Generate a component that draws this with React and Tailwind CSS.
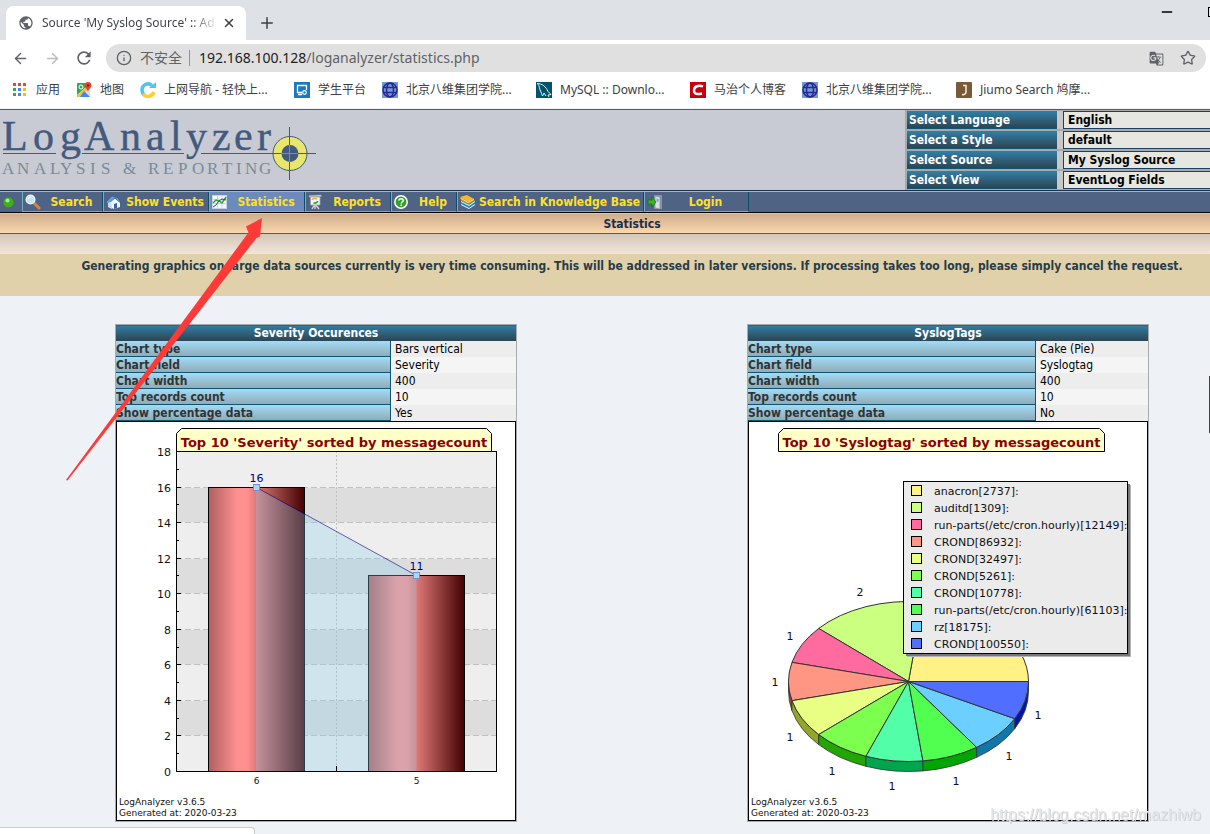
import React from 'react';
import { ArrowLeft, ArrowRight, Info, Minus, Plus, Star, X } from 'lucide-react';
import { MdGTranslate, MdPublic, MdRefresh } from 'react-icons/md';

/* ---------- bookmark icons ---------- */

const AppsIcon = () => (
  <svg width="16" height="16" viewBox="0 0 16 16">
    {['#ea4335', '#ea4335', '#ea4335', '#34a853', '#4285f4', '#fbbc05', '#34a853', '#4285f4', '#fbbc05'].map((c, i) => (
      <rect key={i} x={1 + (i % 3) * 5} y={1 + Math.floor(i / 3) * 5} width="3" height="3" fill={c} />
    ))}
  </svg>
);

const MapsIcon = () => (
  <svg width="16" height="16" viewBox="0 0 16 16">
    <rect x="1" y="1" width="13" height="14" rx="1" fill="#34a853" />
    <path d="M1 13 12 3l2 2v10H3z" fill="#d8dde2" />
    <path d="M1 14 10 5l2 2-8 8H2z" fill="#fbc02d" />
    <path d="M8 9l6 6H4z" fill="#4285f4" />
    <circle cx="5" cy="5" r="2" fill="none" stroke="#fff" />
    <path d="M12 0a3.500 3.500 0 0 1 3.500 3.500C15.500 6 12.500 7 12 10 11.500 7 8.500 6 8.500 3.500A3.500 3.500 0 0 1 12 0z" fill="#ea4335" />
    <circle cx="12" cy="3.500" r="1.200" fill="#8c1d18" />
  </svg>
);

const SwirlIcon = () => (
  <svg width="16" height="16" viewBox="0 0 16 16">
    <path d="M12 3.500A6 6 0 0 0 2 8c0 2 1 4 2.500 5" fill="none" stroke="#4fc4f0" strokeWidth="3.500" />
    <path d="M3 12c3 4 9 3 11-2" fill="none" stroke="#fbd02c" strokeWidth="3.500" />
    <path d="M9 6h7V0z" fill="#4fc4f0" />
  </svg>
);

const PlatformIcon = () => (
  <svg width="16" height="16" viewBox="0 0 16 16">
    <rect width="16" height="16" fill="#1a78c2" />
    <path d="M8 10.500H3.500v-7h9V8M4 12.500h4" fill="none" stroke="#fff" strokeWidth="1.300" />
    <circle cx="10.500" cy="10.500" r="1.800" fill="none" stroke="#fff" strokeWidth="1.200" />
  </svg>
);

const BaweiIcon = () => (
  <svg width="16" height="16" viewBox="0 0 16 16">
    <rect width="16" height="16" fill="#6f9bd0" />
    <g fill="none" stroke="#2a2896" strokeWidth="1.500">
      <circle cx="8" cy="8" r="7" />
      <ellipse cx="8" cy="8" rx="3.500" ry="7" />
      <path d="M1 5.500h14M1 10.500h14" />
    </g>
  </svg>
);

const MysqlIcon = () => (
  <svg width="16" height="16" viewBox="0 0 16 16">
    <rect width="16" height="16" fill="#00546b" />
    <path d="M1 1.500c5 0 9 3 11 8l3 3-3 .5 1 2M1.500 1.500C4 4 3 7 5 10c.5 2 1 3 1.500 4l1.500-3 2 3" fill="none" stroke="#e8f0f3" />
  </svg>
);

const CsdnIcon = () => (
  <svg width="16" height="16" viewBox="0 0 16 16">
    <rect width="16" height="16" fill="#c8000b" />
    <path d="M13 4.500C9 3 4 4 4 8.500c0 4 4 4 8 3" fill="none" stroke="#fff" strokeWidth="2.400" />
  </svg>
);

const JiumoIcon = () => (
  <svg width="16" height="16" viewBox="0 0 16 16">
    <rect width="16" height="16" rx="1" fill="#7c5936" />
    <path d="M7 3.500h3V10c0 2-2 3-4 2.500" fill="none" stroke="#f4efe9" strokeWidth="1.500" />
  </svg>
);

const bookmarks = [
  { label: '应用', icon: AppsIcon, width: 'w-[64px]' },
  { label: '地图', icon: MapsIcon, width: 'w-[64px]' },
  { label: '上网导航 - 轻快上...', icon: SwirlIcon, width: 'w-[154px]' },
  { label: '学生平台', icon: PlatformIcon, width: 'w-[88px]' },
  { label: '北京八维集团学院...', icon: BaweiIcon, width: 'w-[154px]' },
  { label: 'MySQL :: Downlo...', icon: MysqlIcon, width: 'w-[154px]' },
  { label: '马治个人博客', icon: CsdnIcon, width: 'w-[112px]' },
  { label: '北京八维集团学院...', icon: BaweiIcon, width: 'w-[154px]' },
  { label: 'Jiumo Search 鸠摩...', icon: JiumoIcon, width: 'w-[154px]' },
];

/* ---------- menu icons ---------- */

const SearchIcon = () => (
  <svg width="16" height="16" viewBox="0 0 16 16" className="shrink-0">
    <path d="M9 9l5 5" stroke="#d8853a" strokeWidth="3" strokeLinecap="round" />
    <circle cx="5.500" cy="5.500" r="4.300" fill="#bfe3fb" stroke="#e9f1f8" strokeWidth="1.500" />
    <path d="M3 5a3 3 0 0 1 3-2" stroke="#fff" strokeWidth="1.200" fill="none" />
  </svg>
);

const HomeIcon = () => (
  <svg width="16" height="16" viewBox="0 0 16 16" className="shrink-0">
    <path d="M3 8l4-4 7 3v6l-6 2-5-2z" fill="#f1f4f8" />
    <path d="M0 8l6-6 6 2 3 5-3-2-3-3-7 6z" fill="#5f9fdc" stroke="#2c5d94" strokeWidth=".6" />
    <path d="M8 15v-5l3-1v5z" fill="#2f67a5" />
    <path d="M2 9v4l4 2v-4l-2-3z" fill="#d2dbe6" />
  </svg>
);

const StatsIcon = () => (
  <svg width="16" height="16" viewBox="0 0 16 16" className="shrink-0">
    <rect x=".5" y="1.500" width="14" height="13" fill="#f6f8fb" stroke="#c7d3e2" />
    <path d="M1 5.500h13M1 9.500h13M5.500 2v12M10 2v12" stroke="#cad6e6" />
    <path d="M1 9l3-3 3 1 3 2 4-6" fill="none" stroke="#2da82c" strokeWidth="1.500" />
    <path d="M1 13l3-2 3-4 3-2 4 1" fill="none" stroke="#2a4f8c" />
  </svg>
);

const ReportsIcon = () => (
  <svg width="16" height="16" viewBox="0 0 16 16" className="shrink-0">
    <path d="M7 10l-3 5M7 10l4 5M7 10v5" stroke="#d5d9de" strokeWidth="1.300" />
    <path d="M1 1.500l12-.5.5 1.500L1 3z" fill="#e4e7eb" stroke="#8a919b" strokeWidth=".5" />
    <path d="M2.500 3H12v8H2.500z" fill="#f5f6f7" stroke="#9ca3ac" strokeWidth=".8" />
    <path d="M4 6a3 2 0 0 1 5-1" fill="none" stroke="#ecb32d" strokeWidth="1.500" />
    <path d="M9.500 7a3 2 0 0 1-4 2" fill="none" stroke="#2fae36" strokeWidth="1.800" />
  </svg>
);

const HelpIcon = () => (
  <svg width="16" height="16" viewBox="0 0 16 16" className="shrink-0">
    <circle cx="7" cy="8" r="6.200" fill="#35a02a" stroke="#fff" strokeWidth="1.500" />
    <path d="M5 6.500C5 4 9.200 4 9.200 6.500 9.200 8 7.200 8 7.200 9.500M7.200 10.500V12" fill="none" stroke="#fff" strokeWidth="1.500" />
  </svg>
);

const BooksIcon = () => (
  <svg width="16" height="16" viewBox="0 0 16 16" className="shrink-0">
    <path d="M1 10l8 5 6-4-1-3-13-1z" fill="#2e82cc" />
    <path d="M1 10.500l8 4 6-4" fill="none" stroke="#eef4fa" />
    <path d="M1 7l8 4 6-4-2-3-12 1z" fill="#58a83a" />
    <path d="M1 7.500l8 4 6-4" fill="none" stroke="#eef7e9" />
    <path d="M0 3l7-2 7 4-6 3z" fill="#f7b92b" />
    <path d="M0 3v2l8 5 6-4V5L8 8z" fill="#e58a16" />
    <path d="M1 4.500l7 4 6-3" fill="none" stroke="#fdf2d4" strokeWidth=".8" />
  </svg>
);

const LoginIcon = () => (
  <svg width="16" height="16" viewBox="0 0 16 16" className="shrink-0">
    <path d="M7 1h8v14H7z" fill="#8d95a8" />
    <path d="M8 2l5 1v12l-5-1z" fill="#d9ddea" stroke="#7b8296" strokeWidth=".6" />
    <path d="M9.500 4.500l2 .4v3l-2-.4z" fill="#7fa2d8" />
    <path d="M1 6h4V3l4 5-4 5v-3H1z" fill="#38b428" stroke="#14700e" strokeWidth=".7" />
  </svg>
);

const menu = [
  { label: 'Search', icon: SearchIcon, width: 'w-[81px]' },
  { label: 'Show Events', icon: HomeIcon, width: 'w-[106px]' },
  { label: 'Statistics', icon: StatsIcon, width: 'w-[96px]', active: true },
  { label: 'Reports', icon: ReportsIcon, width: 'w-[86px]' },
  { label: 'Help', icon: HelpIcon, width: 'w-[66px]' },
  { label: 'Search in Knowledge Base', icon: BooksIcon, width: 'w-[187px]' },
  { label: 'Login', icon: LoginIcon, width: 'w-[105px]' },
];

const selectors = [
  { id: 'lang', label: 'Select Language', value: 'English' },
  { id: 'style', label: 'Select a Style', value: 'default' },
  { id: 'source', label: 'Select Source', value: 'My Syslog Source' },
  { id: 'view', label: 'Select View', value: 'EventLog Fields' },
];

/* ---------- browser chrome ---------- */

const BrowserChrome = () => (
  <header className="bg-white font-['Noto_Sans','Noto_Sans_CJK_SC',sans-serif] text-xs text-[#3c4043]">
    <div className="flex h-10 items-end justify-between bg-[#dee1e6] pl-[6px]">
      <div className="flex items-center">
        <div className="flex h-[34px] w-60 items-center rounded-t-lg bg-white pl-3">
          <MdPublic size={16} className="shrink-0 text-[#5f6368]" />
          <span className="ml-2 w-[176px] whitespace-nowrap bg-gradient-to-r from-[#3c4043] from-85% to-transparent bg-clip-text text-transparent">
            Source 'My Syslog Source' :: Ad
          </span>
          <button aria-label="Close tab" className="ml-1 text-[#3c4043]">
            <X size={14} strokeWidth={2.5} />
          </button>
        </div>
        <button aria-label="New tab" className="ml-3 text-[#3c4043]">
          <Plus size={18} />
        </button>
      </div>
      <div className="flex items-center self-start pt-1">
        <button aria-label="Minimize" className="text-black">
          <Minus size={16} strokeWidth={2} />
        </button>
        <button aria-label="Maximize" className="ml-[33px] h-[10px] w-[2px] border-y border-l border-black" />
      </div>
    </div>
    <div className="flex h-9 items-center pl-3 pr-1 text-[#5f6368]">
      <button aria-label="Back"><ArrowLeft size={17} /></button>
      <button aria-label="Forward" className="ml-[15px] text-[#babcbe]"><ArrowRight size={17} /></button>
      <button aria-label="Reload" className="ml-[13px]"><MdRefresh size={20} /></button>
      <div className="ml-3 flex h-7 flex-1 items-center rounded-full bg-[#e0e0e0] px-[10px] text-sm">
        <Info size={16} />
        <span className="ml-2">不安全</span>
        <span className="ml-[7px] h-4 w-px bg-[#8f9295]" />
        <span className="ml-[9px] flex-1"><span className="text-[#202124]">192.168.100.128</span>/loganalyzer/statistics.php</span>
        <button aria-label="Translate"><MdGTranslate size={15} /></button>
        <button aria-label="Bookmark" className="ml-4"><Star size={16} /></button>
      </div>
    </div>
    <nav className="flex h-8 items-start pl-3 pt-[6px]">
      {bookmarks.map((b, i) => (
        <a key={i} href="#" className={`flex shrink-0 items-center gap-2 whitespace-nowrap ${b.width}`}>
          <b.icon />
          <span>{b.label}</span>
        </a>
      ))}
    </nav>
  </header>
);

/* ---------- page header ---------- */

const Logo = () => (
  <svg width="320" height="80" viewBox="0 0 320 80" className="font-['Liberation_Serif',serif] font-normal">
    <text x="2 33 60 84 120 146 170 186 212 234 257" y="40" fontSize="42" fill="#435a80" stroke="#435a80" strokeWidth=".4">LogAnalyzer</text>
    <path d="M3 43.500h53M82 43.500h102M201 43.500h74" stroke="#435a80" />
    <text x="2 17 34 50 60 76 90 101 114 123 138 148 163 178 192 207 222 236 245 259" y="64" fontSize="17" fill="#7d899b">ANALYSIS &amp; REPORTING</text>
    <circle cx="290" cy="43.500" r="17" fill="#e9e66f" stroke="#435a80" />
    <circle cx="290" cy="43.500" r="8.500" fill="#435a80" />
    <path d="M264 43.500h52M289.500 17v53" stroke="#435a80" />
    <path d="M281 43.500h17M289.500 35v17" stroke="#7d8ba6" />
  </svg>
);

const PageHeader = () => (
  <div className="flex h-[82px] justify-between border-b border-t border-b-[#1f3048] border-t-[#48607f] bg-[#c8cbd3]">
    <Logo />
    <div className="flex w-[359px] flex-col gap-[2px] border-l-2 border-t border-[#a9a9a9] bg-[#a9a9a9]">
      {selectors.map((s) => (
        <div key={s.id} className="flex h-[18px] bg-[#c8c8c8]">
          <label htmlFor={s.id} className="w-[150px] border-b border-[#0f5570] bg-gradient-to-b from-[#2f80a8] to-[#2b4552] pl-[2px] leading-[18px] text-white">
            {s.label}
          </label>
          <select id={s.id} className="ml-[6px] flex-1 appearance-none border border-[#1c3f66] bg-[#e7e7e2] pl-1 leading-4 text-black">
            <option>{s.value}</option>
          </select>
        </div>
      ))}
    </div>
  </div>
);

const Menu = () => (
  <nav className="flex h-[22px] border-b border-t border-b-black border-t-[#aab5c4] bg-[#4f6485] text-[#fde02f]">
    <div className="flex w-[22px] items-center pl-[3px]">
      <svg width="11" height="11" viewBox="0 0 11 11">
        <circle cx="5.500" cy="5.500" r="5" fill="#3fae1f" />
        <circle cx="4.500" cy="3.500" r="2" fill="#a5ec8b" />
      </svg>
    </div>
    {menu.map((m) => (
      <a
        key={m.label}
        href="#"
        className={`flex shrink-0 items-center whitespace-nowrap border-b border-l border-r border-b-[#6fb0c8] border-l-[#6fb0c8] border-r-[#0f4c66] pl-[2px] pt-px ${m.width} ${m.active ? 'bg-[#6c8abb]' : ''}`}
      >
        <m.icon />
        <span className="flex-1 text-center">{m.label}</span>
      </a>
    ))}
  </nav>
);

/* ---------- charts ---------- */

const ChartFooter = () => (
  <g fontSize="9" fill="#111">
    <text x="3" y="384">LogAnalyzer v3.6.5</text>
    <text x="3" y="395">Generated at: 2020-03-23</text>
  </g>
);

const ChartTitle = ({ left, right, children }) => (
  <g>
    <path
      d={`M${left} 30.500V12.500L${left + 5} 7.500H${right - 5}L${right} 12.500V30.500Z`}
      fill="#ffffc8"
      stroke="#000"
    />
    <text x={(left + right) / 2} y="26" fontSize="13" fontWeight="bold" fill="#8b0000" textAnchor="middle">{children}</text>
  </g>
);

const unit = 320 / 18;
const yAt = (v) => Math.round(350 - v * unit) + 0.5;
const bars = [
  { label: '6', value: 16, x: 92.5 },
  { label: '5', value: 11, x: 252.5 },
];

const BarChart = () => (
  <svg viewBox="0 0 400 400" className="block w-full bg-white font-['DejaVu_Sans',sans-serif] font-normal">
    <defs>
      <linearGradient id="bar">
        <stop offset="0" stopColor="#ae6060" />
        <stop offset=".3" stopColor="#ff9090" />
        <stop offset=".4" stopColor="#ff9090" />
        <stop offset="1" stopColor="#440000" />
      </linearGradient>
    </defs>
    <rect x=".5" y=".5" width="399" height="399" fill="none" stroke="#000" />
    {[0, 1, 2, 3, 4, 5, 6, 7, 8].map((i) => (
      <rect key={i} x="60" y={yAt(i * 2 + 2)} width="320" height={yAt(i * 2) - yAt(i * 2 + 2)} fill={i % 2 ? '#dddddd' : '#eeeeee'} />
    ))}
    {[2, 4, 6, 8, 10, 12, 14, 16].map((v) => (
      <path key={v} d={`M60 ${yAt(v)}H380`} stroke="#c0c0c0" strokeDasharray="6 3" />
    ))}
    <path d="M220.500 30V350" stroke="#bdbdbd" strokeDasharray="2 2" />
    {bars.map((b) => (
      <rect key={b.label} x={b.x} y={yAt(b.value)} width="96" height={350.5 - yAt(b.value)} fill="url(#bar)" stroke="#000" />
    ))}
    <path d={`M140 ${yAt(16)}L300.500 ${yAt(11)}V350H140z`} fill="#87ceeb" fillOpacity=".3" />
    <path d={`M140.500 ${yAt(16)}L300.500 ${yAt(11)}`} stroke="#000080" strokeOpacity=".6" />
    <rect x="60.500" y="30.500" width="320" height="320" fill="none" stroke="#000" />
    <path d="M220.500 350v-5" stroke="#000" />
    {Array.from({ length: 18 }, (_, v) => (
      <path key={v} d={`M60 ${yAt(v)}h${v % 2 ? 3 : 5}`} stroke="#000" />
    ))}
    {[0, 2, 4, 6, 8, 10, 12, 14, 16, 18].map((v) => (
      <text key={v} x="55" y={yAt(v) + 4} fontSize="11" fill="#111" textAnchor="end">{v}</text>
    ))}
    {bars.map((b) => (
      <g key={b.label} textAnchor="middle">
        <rect x={b.x + 45} y={yAt(b.value) - 3} width="6" height="6" fill="#add8e6" stroke="#6f8fe8" />
        <text x={b.x + 48} y={yAt(b.value) - 6} fontSize="11" fill="#000080">{b.value}</text>
        <text x={b.x + 48} y="363" fontSize="9" fill="#111">{b.label}</text>
      </g>
    ))}
    <ChartTitle left={60.5} right={375.5}>Top 10 'Severity' sorted by messagecount</ChartTitle>
    <ChartFooter />
  </svg>
);

const slices = [
  { name: 'anacron[2737]:', count: 3, color: '#fff284', side: '#aa9d2f' },
  { name: 'auditd[1309]:', count: 2, color: '#caff80', side: '#75aa2b', lx: 112, ly: 175 },
  { name: 'run-parts(/etc/cron.hourly)[12149]:', count: 1, color: '#ff6b9e', side: '#aa1649', lx: 42, ly: 219 },
  { name: 'CROND[86932]:', count: 1, color: '#ff9583', side: '#aa402e', lx: 27, ly: 265 },
  { name: 'CROND[32497]:', count: 1, color: '#e9ff84', side: '#94a52c', lx: 42, ly: 320 },
  { name: 'CROND[5261]:', count: 1, color: '#7dff50', side: '#24a600', lx: 84, ly: 354 },
  { name: 'CROND[10778]:', count: 1, color: '#52ffa8', side: '#00a54e', lx: 144, ly: 369 },
  { name: 'run-parts(/etc/cron.hourly)[61103]:', count: 1, color: '#50ff50', side: '#00a600', lx: 208, ly: 364 },
  { name: 'rz[18175]:', count: 1, color: '#6bcfff', side: '#1176a8', lx: 261, ly: 339 },
  { name: 'CROND[100550]:', count: 1, color: '#506eff', side: '#0016a8', lx: 290, ly: 298 },
];

const total = slices.reduce((sum, s) => sum + s.count, 0);
const point = (n) => {
  const a = (n / total) * Math.PI * 2;
  return [160.5 + 120 * Math.cos(a), 260.5 - 80 * Math.sin(a)];
};

const wedges = slices.map((s, i) => {
  const start = slices.slice(0, i).reduce((sum, p) => sum + p.count, 0);
  const end = start + s.count;
  const [x1, y1] = point(start);
  const [x2, y2] = point(end);
  // only the front half of the rim shows its side
  const [sx, sy] = point(Math.max(start, total / 2));
  return {
    ...s,
    top: `M160.500 260.500L${x1} ${y1}A120 80 0 0 0 ${x2} ${y2}Z`,
    rim: end > total / 2 ? `M${sx} ${sy}A120 80 0 0 0 ${x2} ${y2}v10A120 80 0 0 1 ${sx} ${sy + 10}Z` : null,
  };
});

const PieChart = () => (
  <svg viewBox="0 0 400 400" className="block w-full bg-white font-['DejaVu_Sans',sans-serif] font-normal">
    <rect x=".5" y=".5" width="399" height="399" fill="none" stroke="#000" />
    <ChartTitle left={30.5} right={356.5}>Top 10 'Syslogtag' sorted by messagecount</ChartTitle>
    {wedges.map((w) => w.rim && <path key={w.name} d={w.rim} fill={w.side} stroke="#333" strokeWidth=".8" />)}
    {wedges.map((w) => <path key={w.name} d={w.top} fill={w.color} stroke="#333" />)}
    {wedges.map((w) => w.lx && (
      <text key={w.name} x={w.lx} y={w.ly} fontSize="11" fill="#111" textAnchor="middle">{w.count}</text>
    ))}
    <rect x="159" y="64" width="224" height="172" fill="#b5b5b5" />
    <rect x="158" y="63" width="224" height="172" fill="#777" />
    <rect x="155.500" y="60.500" width="224" height="172" fill="#ebebeb" stroke="#000" />
    {slices.map((s, i) => (
      <g key={s.name}>
        <rect x="163.500" y={64.5 + i * 17} width="10" height="10" fill={s.color} stroke="#000" />
        <text x="186" y={74 + i * 17} fontSize="11" fill="#111">{s.name}</text>
      </g>
    ))}
    <ChartFooter />
  </svg>
);

const ChartCard = ({ title, rows, labelWidth, children }) => (
  <div className="w-[402px] border border-[#a9a9a9]">
    <table className="w-full table-fixed border-collapse">
      <colgroup>
        <col className={labelWidth} />
        <col />
      </colgroup>
      <thead>
        <tr>
          <th colSpan={2} className="h-4 bg-gradient-to-b from-[#2f80a8] to-[#2b4552] p-0 leading-4 text-white shadow-[inset_0_1px_0_#1b6a8c]">{title}</th>
        </tr>
      </thead>
      <tbody>
        {rows.map(([name, value], i) => (
          <tr key={name} className={i % 2 ? 'bg-[#f5f5f5]' : 'bg-[#ededed]'}>
            <th scope="row" className="h-4 bg-gradient-to-b from-[#a0dcf8] to-[#8fa8b3] p-0 text-left leading-4 text-[#333] shadow-[inset_-1px_-1px_0_#0f5570]">{name}</th>
            <td className="h-4 p-0 pl-1 font-normal leading-4 text-black">{value}</td>
          </tr>
        ))}
      </tbody>
    </table>
    {children}
  </div>
);

const rowsFor = (type, field, percentage) => [
  ['Chart type', type],
  ['Chart field', field],
  ['Chart width', '400'],
  ['Top records count', '10'],
  ['Show percentage data', percentage],
];

export default function App() {
  return (
    <div className="relative h-screen overflow-hidden bg-[#eef1f6]">
      <BrowserChrome />
      {/* the page is wider than the window and runs off its right side */}
      <main className="-mr-[54px] mt-px font-['DejaVu_Sans_Condensed','DejaVu_Sans',sans-serif] text-xs font-bold">
        <PageHeader />
        <Menu />
        <h1 className="h-[21px] border-b border-t border-b-[#48607f] border-t-[#c8cbd3] bg-gradient-to-b from-[#cfae8c] to-[#fbd7ae] text-center leading-[21px] text-[#1a2f4f]">Statistics</h1>
        <div className="h-5 bg-gradient-to-b from-[#d3c7ba] to-[#f2e6d9]" />
        <p className="h-[42px] bg-[#e1d1ab] pt-1 text-center leading-4 text-[#283c46]">
          Generating graphics on large data sources currently is very time consuming. This will be addressed in later versions. If processing takes too long, please simply cancel the request.
        </p>
        <div className="grid grid-cols-2 justify-items-center pt-7">
          <ChartCard title="Severity Occurences" labelWidth="w-[275px]" rows={rowsFor('Bars vertical', 'Severity', 'Yes')}>
            <BarChart />
          </ChartCard>
          <ChartCard title="SyslogTags" labelWidth="w-[288px]" rows={rowsFor('Cake (Pie)', 'Syslogtag', 'No')}>
            <PieChart />
          </ChartCard>
        </div>
      </main>

      <svg width="210" height="270" viewBox="60 215 210 270" className="pointer-events-none absolute left-[60px] top-[215px]">
        <path d="M66 480L248.500 232.500 246 226.500 262 218 260 236.500 256.500 238 67.500 480.500z" fill="#fd3a38" />
      </svg>
      <div className="absolute right-0 top-[376px] h-[57px] w-px bg-[#444]" />
      <div className="absolute bottom-0 left-0 h-[7px] w-[255px] rounded-tr border-r border-t border-[#c9ccd0] bg-white" />
      <div className="absolute bottom-[9px] right-[9px] font-['Liberation_Sans',sans-serif] text-base leading-5 text-[#e3e5e8] drop-shadow-[1px_1px_0_#d0d2d6]">
        https://blog.csdn.net/mazhiwb
      </div>
    </div>
  );
}
